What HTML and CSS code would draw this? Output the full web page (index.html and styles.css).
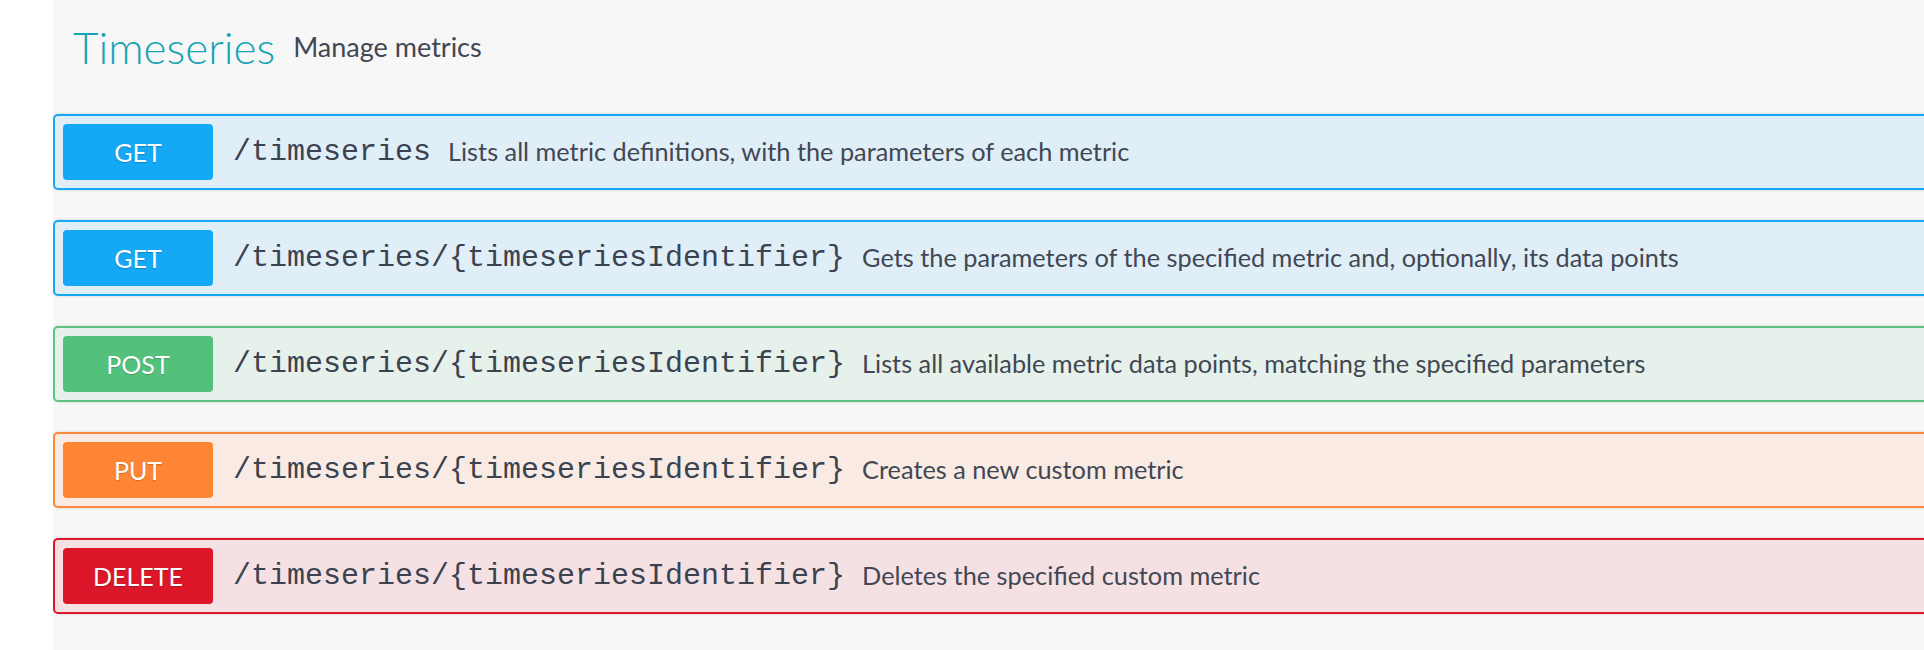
FILE: index.html
```html
<!DOCTYPE html>
<html lang="en">
<head>
<meta charset="utf-8">
<title>Timeseries</title>
<link rel="stylesheet" href="styles.css">
</head>
<body>
<div class="page">
  <section class="panel">
    <header class="tag-header">
      <h2 class="tag-title">Timeseries</h2>
      <span class="tag-sub">Manage metrics</span>
    </header>
    <div class="ops">
      <div class="op op-get">
        <span class="method">GET</span>
        <span class="path">/timeseries</span>
        <span class="desc">Lists all metric definitions, with the parameters of each metric</span>
      </div>
      <div class="op op-get">
        <span class="method">GET</span>
        <span class="path">/timeseries/{timeseriesIdentifier}</span>
        <span class="desc">Gets the parameters of the specified metric and, optionally, its data points</span>
      </div>
      <div class="op op-post">
        <span class="method">POST</span>
        <span class="path">/timeseries/{timeseriesIdentifier}</span>
        <span class="desc">Lists all available metric data points, matching the specified parameters</span>
      </div>
      <div class="op op-put">
        <span class="method">PUT</span>
        <span class="path">/timeseries/{timeseriesIdentifier}</span>
        <span class="desc">Creates a new custom metric</span>
      </div>
      <div class="op op-delete">
        <span class="method">DELETE</span>
        <span class="path">/timeseries/{timeseriesIdentifier}</span>
        <span class="desc">Deletes the specified custom metric</span>
      </div>
    </div>
  </section>
</div>
</body>
</html>
```

FILE: styles.css
```css
html, body {
  margin: 0;
  padding: 0;
  background: #ffffff;
}

body {
  font-family: Lato, "Open Sans", sans-serif;
  color: #414753;
}

.page {
  width: 1924px;
  height: 650px;
  overflow: hidden;
  padding-left: 53px;
  box-sizing: border-box;
}

.panel {
  background: #f7f7f7;
  height: 650px;
  overflow: hidden;
  padding-top: 20px;
  box-sizing: border-box;
}

.tag-header {
  display: flex;
  align-items: center;
  padding-left: 20px;
  height: 54px;
  margin-bottom: 40px;
}

.tag-title {
  margin: 0;
  font-family: Lato, sans-serif;
  font-weight: 300;
  font-size: 44px;
  line-height: 53px;
  color: #14a4b4;
}

.tag-sub {
  margin-left: 18px;
  font-size: 27px;
  font-weight: 400;
  color: #414753;
  position: relative;
  top: -1px;
}

.ops {
  display: flex;
  flex-direction: column;
  gap: 30px;
  margin-right: -20px;
}

.op {
  display: flex;
  align-items: center;
  border: 2px solid;
  border-radius: 5px;
  padding: 8px;
  box-shadow: 0 0 3px rgba(0, 0, 0, 0.18);
}

.method {
  flex: none;
  width: 150px;
  height: 56px;
  border-radius: 4px;
  display: flex;
  align-items: center;
  justify-content: center;
  color: #ffffff;
  font-size: 25px;
  font-weight: 400;
  text-shadow: 0 1px 1px rgba(0, 0, 0, 0.2);
}

.path {
  margin-left: 20px;
  font-family: "Liberation Mono", "Courier New", monospace;
  font-size: 30px;
  color: #3b4250;
}

.desc {
  margin-left: 17px;
  font-size: 25.3px;
  color: #414753;
  position: relative;
  top: -1px;
}

.op-get {
  background: #e0eef8;
  border-color: #14a8f5;
}
.op-get .method {
  background: #14a8f5;
}

.op-post {
  background: #e6f1eb;
  border-color: #5ec482;
}
.op-post .method {
  background: #53c17b;
}

.op-put {
  background: #f9ebe3;
  border-color: #fd8a3c;
}
.op-put .method {
  background: #fe8533;
}

.op-delete {
  background: #f5e1e3;
  border-color: #dc172a;
}
.op-delete .method {
  background: #dc172a;
}
```
